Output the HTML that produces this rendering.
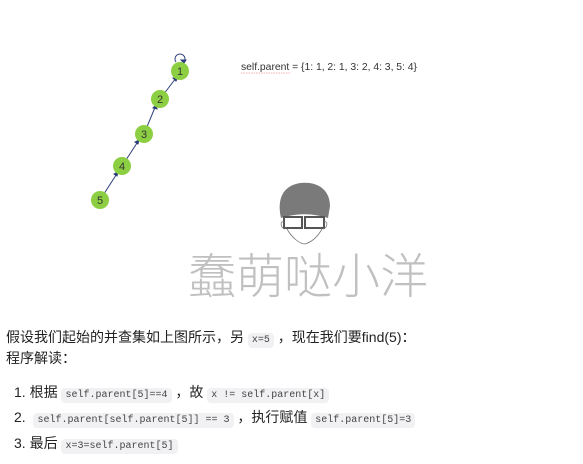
<!DOCTYPE html>
<html><head><meta charset="utf-8"><style>
body{margin:0;width:583px;height:464px;background:#fff;font-family:"Liberation Sans","Noto Sans CJK SC",sans-serif;color:#222;position:relative;overflow:hidden}
.t{position:absolute;font-size:14px;white-space:nowrap;line-height:20px}
code{font-family:"Liberation Mono",monospace;font-size:10px;background:#f1f1f3;border-radius:4px;padding:2px 4px;color:#444}
</style></head><body>
<svg width="583" height="310" style="position:absolute;left:0;top:0">
<g stroke="#2b3c7a" stroke-width="1" fill="#2b3c7a">
<line x1="100" y1="200" x2="118" y2="172"/><polygon points="118,172 114,174 117,176"/>
<line x1="122" y1="166" x2="139" y2="140"/><polygon points="139,140 135,142 138,144"/>
<line x1="144" y1="134" x2="156" y2="105"/><polygon points="156,105 153,108 157,109"/>
<line x1="160" y1="99" x2="176" y2="78"/><polygon points="178,77 173,78 176,81"/>
<path d="M176,62 A5,5 0 1 1 184,62" fill="none"/><polygon points="184,63 181,60 186,60"/>
</g>
<g fill="#8dcf42">
<circle cx="180" cy="71" r="9"/><circle cx="160" cy="99" r="9"/><circle cx="144" cy="134" r="9"/><circle cx="122" cy="166" r="9"/><circle cx="100" cy="200" r="9"/>
</g>
<g font-size="11" fill="#333" text-anchor="middle" font-family="Liberation Sans,sans-serif">
<text x="180" y="75">1</text><text x="160" y="103">2</text><text x="144" y="138">3</text><text x="122" y="170">4</text><text x="100" y="204">5</text>
</g>
<text x="241" y="70" font-size="10.4" fill="#333" font-family="Liberation Sans,sans-serif" textLength="176">self.parent = {1: 1, 2: 1, 3: 2, 4: 3, 5: 4}</text>
<line x1="241" y1="73" x2="290" y2="73" stroke="#e99" stroke-width="0.8" stroke-dasharray="1.5,1"/>
<path d="M281,218 C277,200 282,186 300,183 C318,181 330,190 330,206 L328,218 C315,214 300,212 281,218 Z" fill="#7a7a7a"/>
<rect x="284" y="217" width="18" height="11" fill="none" stroke="#555" stroke-width="2"/>
<rect x="305" y="217" width="19" height="11" fill="none" stroke="#555" stroke-width="2"/>
<path d="M284,222 C280,220 280,228 285,229 M324,222 C328,220 328,228 323,229 M287,229 C292,238 300,244 305,244 C312,242 318,236 322,229" fill="none" stroke="#777" stroke-width="0.8"/>
<text x="308" y="293" font-size="48" fill="#c0c0c0" text-anchor="middle" font-family="Noto Sans CJK SC,sans-serif" font-weight="300">蠢萌哒小洋</text>
</svg>
<div class="t" style="left:6px;top:327px">假设我们起始的并查集如上图所示，另 <code>x=5</code> ，现在我们要find(5)：</div>
<div class="t" style="left:6px;top:348px">程序解读：</div>
<div class="t" style="left:14px;top:382px">1. 根据 <code>self.parent[5]==4</code> ，故 <code>x != self.parent[x]</code></div>
<div class="t" style="left:14px;top:407px">2.&nbsp; <code>self.parent[self.parent[5]] == 3</code> ，执行赋值 <code>self.parent[5]=3</code></div>
<div class="t" style="left:14px;top:433px">3. 最后 <code>x=3=self.parent[5]</code></div>
</body></html>
